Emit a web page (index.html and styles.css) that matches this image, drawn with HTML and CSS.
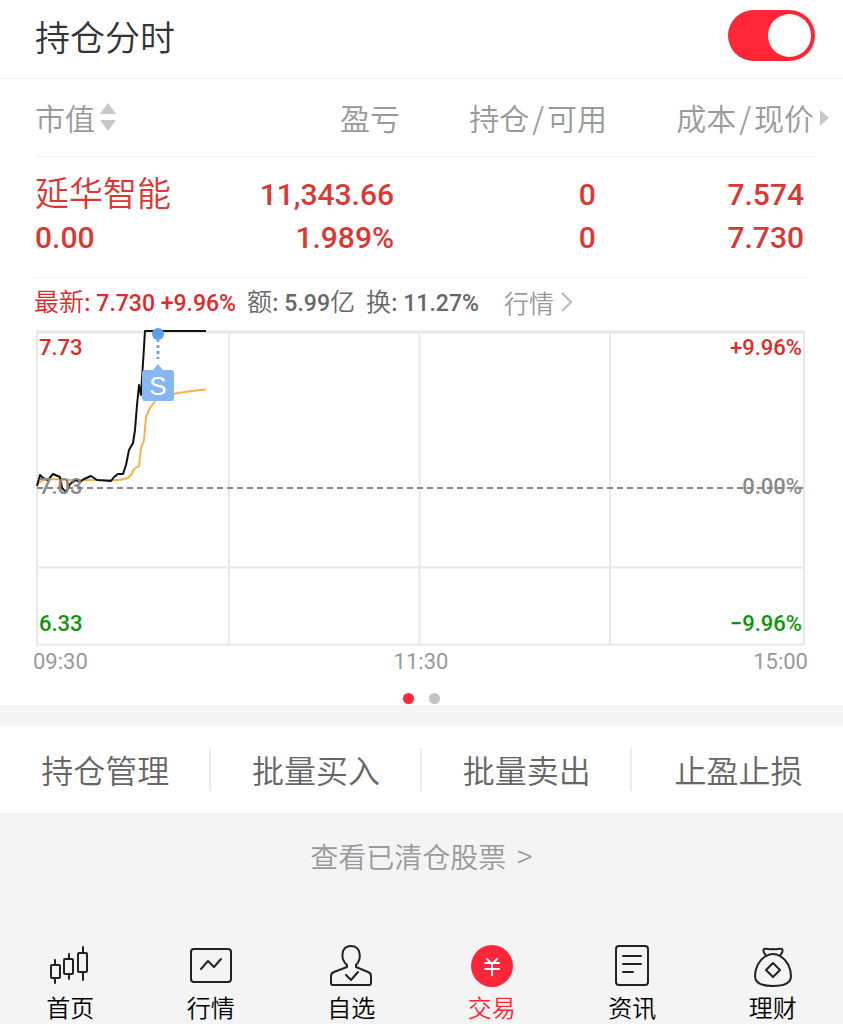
FILE: index.html
```html
<!DOCTYPE html>
<html lang="zh-CN">
<head>
<meta charset="utf-8">
<meta name="viewport" content="width=device-width, initial-scale=1">
<title>持仓分时</title>
<link rel="stylesheet" href="styles.css">
</head>
<body>
<div class="app">
  <header class="topbar">
    <label class="topbar-title" for="intraday">持仓分时</label>
    <input class="switch" id="intraday" type="checkbox" role="switch" checked>
  </header>

  <main>
    <section class="panel">
      <table class="holdings">
        <thead>
          <tr>
            <th class="col-name"><button class="sort" type="button">市值<svg class="sort-icon" viewBox="0 0 16 28" aria-hidden="true"><path d="M8 0l8 11H0zM8 28L0 17h16z"/></svg></button></th>
            <th class="col-profit">盈亏</th>
            <th class="col-amount">持仓<span class="slash">/</span>可用</th>
            <th class="col-price">成本<span class="slash">/</span>现价<svg class="more-icon" viewBox="0 0 9 16" aria-hidden="true"><path d="M0 0l9 8-9 8z"/></svg></th>
          </tr>
        </thead>
        <tbody>
          <tr>
            <td><span class="line stock">延华智能</span><span class="line">0.00</span></td>
            <td><span class="line">11,343.66</span><span class="line">1.989%</span></td>
            <td><span class="line">0</span><span class="line">0</span></td>
            <td><span class="line">7.574</span><span class="line">7.730</span></td>
          </tr>
        </tbody>
      </table>

      <div class="quote">
        <span class="quote-last">最新: <b>7.730 +9.96%</b></span>
        <span>额: <b>5.99</b>亿</span>
        <span>换: <b>11.27%</b></span>
        <a class="quote-link" href="#quote">行情<svg class="chevron" viewBox="0 0 13 20" aria-hidden="true"><path d="M2 1l9 9-9 9"/></svg></a>
      </div>

      <svg class="chart" viewBox="32 328 779 350" role="img" aria-label="分时走势">
        <g class="grid">
          <path d="M37 331V645M229 331V645M419.500 331V645M610 331V645M804 331V645M36 567.500H805M36 644.500H805"/>
          <path class="grid-top" d="M36 332H805"/>
        </g>
        <path class="base" d="M37 488H804"/>
        <path class="average" d="M37 484L43 480L56 479L72 480L100 480L120 480L128 478L131 475L134 469L139 466L141 448L144 440L146 417L150 408L156 400L165 396L178 393L192 391L206 389.500"/>
        <path class="price" d="M37 486L40 475L43 478L48 480L53 474L60 477L62 488L66 492L70 484L76 480L80 482L84 479L91 476L97 480L111 481L114 477L118 474L123 474L126 465L129 450L133 443L135 430L137 405L139 385L141 395L145 331H206"/>
        <g class="axis">
          <text class="up" x="39" y="355">7.73</text>
          <text class="up" x="802" y="355" text-anchor="end">+9.96%</text>
          <text class="flat" x="39" y="494">7.03</text>
          <text class="flat" x="802" y="494" text-anchor="end">0.00%</text>
          <text class="down" x="39" y="631">6.33</text>
          <text class="down" x="802" y="631" text-anchor="end">−9.96%</text>
          <text class="time" x="33" y="669">09:30</text>
          <text class="time" x="421" y="669" text-anchor="middle">11:30</text>
          <text class="time" x="808" y="669" text-anchor="end">15:00</text>
        </g>
        <g class="marker">
          <circle cx="158" cy="334" r="6"/>
          <path class="marker-dots" d="M158 339v20"/>
          <path class="marker-box" d="M145 370h8l5-6 5 6h8q3 0 3 3v25q0 3-3 3h-26q-3 0-3-3v-25q0-3 3-3z"/>
          <text class="marker-text" x="158" y="395" text-anchor="middle">S</text>
        </g>
      </svg>

      <div class="dots" aria-hidden="true"><span class="dot dot-on"></span><span class="dot"></span></div>
    </section>

    <div class="actions">
      <button class="action" type="button">持仓管理</button>
      <button class="action" type="button">批量买入</button>
      <button class="action" type="button">批量卖出</button>
      <button class="action" type="button">止盈止损</button>
    </div>

    <a class="cleared" href="#cleared">查看已清仓股票<span class="cleared-arrow">&gt;</span></a>
  </main>

  <nav class="tabs">
    <a class="tab" href="#home">
      <svg class="tab-icon" viewBox="0 0 44 44" aria-hidden="true"><path d="M7 16v5M7 35v4M21 10v5M21 30v5M35 3v6M35 28v8"/><rect x="3" y="21" width="9" height="13" rx="1"/><rect x="16" y="15" width="9" height="15" rx="1"/><rect x="30" y="9" width="9" height="19" rx="1"/></svg>
      首页</a>
    <a class="tab" href="#market">
      <svg class="tab-icon" viewBox="0 0 44 44" aria-hidden="true"><rect x="2" y="5" width="40" height="33" rx="3"/><path d="M12 25l7-8 6 6 7-8"/></svg>
      行情</a>
    <a class="tab" href="#watch">
      <svg class="tab-icon" viewBox="0 0 44 44" aria-hidden="true"><path d="M18 23v-2C11 15 12 2 22 2S33 15 27 21v2l12 5q3 1 3 4v7q0 2-2 2H4q-2 0-2-2v-7q0-3 3-4z"/><path d="M17 31l5 5 7-8"/></svg>
      自选</a>
    <a class="tab tab-on" href="#trade" aria-current="page">
      <svg class="tab-icon" viewBox="0 0 44 44" aria-hidden="true"><circle class="coin" cx="22" cy="22" r="21"/><path class="yen" d="M17 15l5 5 5-5M22 20v11M15 19h14M15 25h14"/></svg>
      交易</a>
    <a class="tab" href="#news">
      <svg class="tab-icon" viewBox="0 0 44 44" aria-hidden="true"><rect x="6" y="2" width="32" height="39" rx="3"/><path d="M13 12h18M13 20h18M13 28h10"/></svg>
      资讯</a>
    <a class="tab" href="#wealth">
      <svg class="tab-icon" viewBox="0 0 44 44" aria-hidden="true"><path d="M15 12C14 9 11 8 13 5c4-1 5 1 9 0 4 1 5-1 9 0 2 3-1 4-2 7"/><path d="M15 12q7-4 14 0c7 4 11 12 11 20 0 7-6 10-18 10S4 39 4 32C4 24 8 16 15 12z"/><path d="M22 19l7 7-7 7-7-7z"/></svg>
      理财</a>
  </nav>
</div>
</body>
</html>
```

FILE: styles.css
```css
* { box-sizing: border-box; }

body {
  margin: 0;
  background: #f4f4f4;
  color: #333;
  font-family: "Noto Sans CJK SC", sans-serif;
  font-weight: 350;
}

a { color: inherit; text-decoration: none; }

button {
  margin: 0;
  padding: 0;
  border: 0;
  background: none;
  color: inherit;
  font: inherit;
}

.app {
  display: flex;
  flex-direction: column;
  min-height: 100vh;
}

main { flex: 1; }

.topbar {
  display: flex;
  align-items: center;
  justify-content: space-between;
  height: 79px;
  padding: 0 28px 7px 35px;
  border-bottom: 1px solid #f0f0f0;
  background: #fff;
}

.topbar-title { font-size: 35px; line-height: 48px; }

.switch {
  appearance: none;
  display: flex;
  justify-content: flex-end;
  align-items: center;
  width: 87px;
  height: 51px;
  margin: 0;
  padding: 4px;
  border-radius: 26px;
  background: #ff2638;
}

.switch::before {
  content: "";
  width: 43px;
  height: 43px;
  border-radius: 50%;
  background: #fff;
}

.switch:not(:checked) { justify-content: flex-start; background: #ccc; }

.panel { background: #fff; }

.holdings {
  width: calc(100% - 62px);
  margin: 0 27px 0 35px;
  border-spacing: 0;
  table-layout: fixed;
}

.holdings th {
  position: relative;
  height: 78px;
  padding: 0 2px 2px 0;
  border-bottom: 1px solid #f2f2f2;
  color: #999;
  font-size: 30px;
  font-weight: 350;
  line-height: 44px;
  text-align: right;
}

.holdings .col-name { width: 21%; text-align: left; }
.col-profit { width: 26%; }
.holdings .col-amount { width: 27%; padding-right: 6px; }

.slash { margin: 0 3px; }

.sort { display: flex; align-items: center; gap: 5px; }
.sort-icon { width: 16px; height: 28px; fill: #c8c8c8; }

.more-icon {
  position: absolute;
  right: -13px;
  top: 31px;
  width: 9px;
  height: 16px;
  fill: #c8c8c8;
}

.holdings td {
  padding: 16px 12px 18px 0;
  color: #dc3732;
  font-family: Roboto, "Noto Sans CJK SC", sans-serif;
  font-size: 30px;
  font-weight: 500;
  text-align: right;
}

.holdings td:first-child { padding-right: 0; text-align: left; }
.holdings td:nth-child(2) { padding-right: 8px; }
.holdings td:nth-child(3) { padding-right: 17px; }

.line { display: block; line-height: 43px; }
.stock { font-size: 34px; font-weight: 350; }

.quote {
  display: flex;
  align-items: center;
  gap: 11px;
  height: 51px;
  margin: 0 36px 0 34px;
  padding-bottom: 2px;
  border-top: 1px solid #f2f2f2;
  color: #666;
  font-size: 25px;
  line-height: 36px;
  white-space: nowrap;
}

.quote b {
  font-family: Roboto, sans-serif;
  font-size: 23px;
  font-weight: 500;
}

.quote-last { color: #e02a2a; }

.quote-link {
  display: flex;
  align-items: center;
  gap: 6px;
  margin-left: 14px;
  color: #999;
}

.chevron {
  width: 13px;
  height: 20px;
  fill: none;
  stroke: #b8b8b8;
  stroke-width: 2;
}

.chart {
  display: block;
  width: calc(100% - 64px);
  margin: 0 32px;
}

.grid { fill: none; stroke: #e8e8e8; stroke-width: 2; }
.grid-top { stroke-width: 3; }

.axis {
  font-family: Roboto, sans-serif;
  font-size: 22px;
  font-weight: 500;
}

.up { fill: #e02a2a; }
.down { fill: #0a960a; }
.flat { fill: #888; }
.time { fill: #999; font-weight: 400; }

.base { stroke: #888; stroke-width: 2; stroke-dasharray: 6 4; }

.average,
.price {
  fill: none;
  stroke-width: 2;
  stroke-linejoin: round;
}

.average { stroke: #fbb04c; }
.price { stroke: #111; }

.marker { fill: #5e9fec; }
.marker-dots { stroke: #6aa6ee; stroke-width: 3; stroke-dasharray: 3 3; }
.marker-box { fill: #86b7f2; }

.marker-text {
  fill: #fff;
  font-family: "Liberation Sans", sans-serif;
  font-size: 26px;
  font-weight: 400;
}

.dots {
  display: flex;
  justify-content: center;
  gap: 15px;
  padding: 15px 0 1px;
}

.dot {
  width: 11px;
  height: 11px;
  border-radius: 50%;
  background: #c2c2c2;
}

.dot-on { background: #ff2638; }

.actions {
  display: grid;
  grid-template-columns: repeat(4, 1fr);
  margin-top: 21px;
  padding: 22px 0;
  background: #fff;
}

.action {
  height: 43px;
  padding-left: 2px;
  color: #666;
  font-size: 32px;
  line-height: 43px;
}

.action:not(:last-child) { border-right: 2px solid #ececec; }

.cleared {
  display: flex;
  justify-content: center;
  gap: 10px;
  padding: 23px 0;
  color: #999;
  font-size: 28px;
  line-height: 40px;
}

.cleared-arrow { font-family: Roboto, sans-serif; font-size: 32px; }

.tabs {
  display: grid;
  grid-template-columns: repeat(6, 1fr);
}

.tab {
  display: flex;
  flex-direction: column;
  align-items: center;
  color: #000;
  font-size: 24px;
  line-height: 34px;
}

.tab-icon {
  width: 44px;
  height: 44px;
  margin-bottom: 2px;
  fill: none;
  stroke: #222;
  stroke-width: 2;
  stroke-linecap: round;
  stroke-linejoin: round;
}

.tab-on { color: #ff2638; }
.coin { fill: #ff2638; stroke: none; }
.yen { stroke: #fff; }
```
